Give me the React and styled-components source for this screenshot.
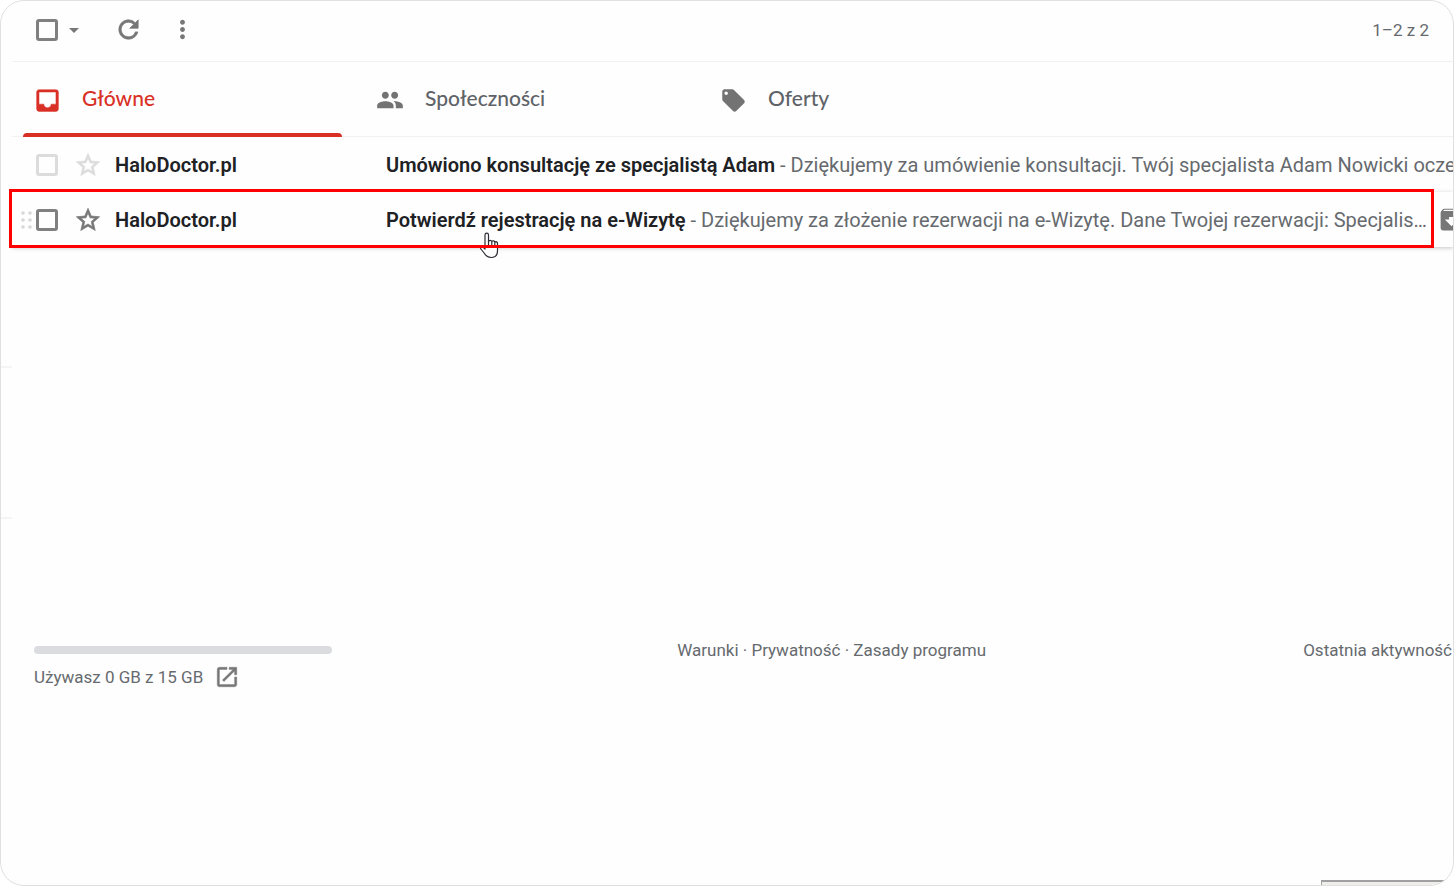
import React, { useState } from 'react';
import styled, { createGlobalStyle } from 'styled-components';
import {
  MdArchive,
  MdArrowDropDown,
  MdInbox,
  MdLocalOffer,
  MdMoreVert,
  MdOpenInNew,
  MdPeople,
  MdRefresh,
  MdStarBorder
} from 'react-icons/md';

const GlobalStyle = createGlobalStyle`
  *, *::before, *::after {
    box-sizing: border-box;
  }

  body {
    margin: 0;
    background: #ffffff;
    color: #666a6e;
    font-family: Roboto, 'Liberation Sans', sans-serif;
    font-size: 17px;
  }

  svg path[fill='none'] {
    stroke-width: 0;
  }
`;

const Frame = styled.div`
  position: relative;
  display: flex;
  min-height: 100vh;
  border: 1px solid #e0e0e0;
  border-radius: 24px;
  background: #fefefe;
  overflow: hidden;
`;

const Rail = styled.aside`
  flex: 0 0 11px;
  display: flex;
  flex-direction: column;
  padding-top: 365px;
  gap: 149px;
`;

const RailLine = styled.div`
  height: 2px;
  background: #f5f5f5;
`;

const Main = styled.main`
  flex: 1;
  min-width: 0;
`;

const Toolbar = styled.header`
  display: flex;
  align-items: center;
  height: 61px;
  padding: 0 24px;
  padding-bottom: 3px;
  border-bottom: 1px solid #f1f1f1;
`;

const Checkbox = styled.input`
  appearance: none;
  flex: none;
  width: 22px;
  height: 22px;
  margin: 0;
  border: 3px solid ${props => (props.$faint ? '#dcdcdc' : '#808080')};
  border-radius: 3px;

  &:checked {
    background: #808080;
  }
`;

const IconButton = styled.button`
  display: flex;
  align-items: center;
  justify-content: center;
  flex: none;
  width: ${props => props.$width || 30}px;
  height: 30px;
  padding: 0;
  border: 0;
  background: none;
  color: ${props => props.$color || '#777777'};
  cursor: pointer;

  svg {
    flex: none;
    stroke-width: ${props => (props.$bold ? 0.6 : 0)};
  }
`;

const ToolGroup = styled.div`
  display: flex;
  align-items: center;
  gap: 24px;
  margin-left: 23px;
`;

const Count = styled.span`
  margin-left: auto;
`;

const Tabs = styled.nav`
  display: flex;
  height: 75px;
  border-bottom: 1px solid #f1f1f1;
`;

const Tab = styled.button`
  position: relative;
  display: flex;
  align-items: center;
  gap: 20px;
  width: 343px;
  padding: 0 20px;
  border: 0;
  background: none;
  color: ${props => (props.$active ? '#d93025' : '#5f6368')};
  font-family: Lato, 'Liberation Sans', sans-serif;
  font-size: 21px;
  font-weight: 500;
  text-align: left;
  cursor: pointer;

  &::after {
    content: '';
    position: absolute;
    right: 13px;
    bottom: -1px;
    left: 11px;
    height: 4px;
    border-radius: 4px 4px 0 0;
    background: ${props => (props.$active ? '#d93025' : 'transparent')};
  }
`;

const TabIcon = styled.span`
  display: flex;
  justify-content: center;
  width: 30px;
  padding-top: 2px;
  color: ${props => (props.$active ? '#d93025' : '#737373')};

  svg {
    stroke-width: ${props => (props.$active ? 0.4 : 0)};
  }
`;

const TabLabel = styled.span`
  padding-bottom: 4px;
`;

const MailList = styled.ul`
  margin: 0;
  padding: 0;
  list-style: none;
`;

const MailRow = styled.li`
  position: relative;
  display: flex;
  align-items: center;
  height: 55px;
  box-shadow: ${props => (props.$hovered ? '0 1px 4px rgba(60, 64, 67, 0.3)' : 'none')};
  font-size: 20px;
  white-space: nowrap;
`;

const Grip = styled.span`
  display: flex;
  flex: 0 0 24px;
  padding-left: 9px;
`;

const StarSlot = styled.span`
  flex: 0 0 57px;
  padding-left: 15px;
`;

const Sender = styled.span`
  flex: 0 0 271px;
  color: #202124;
  font-weight: 600;
`;

const Message = styled.a`
  flex: 1;
  min-width: 0;
  color: #666a6e;
  text-decoration: none;
`;

const Subject = styled.strong`
  color: #202124;
  font-weight: 600;
`;

const RowActions = styled.span`
  display: flex;
  flex: 0 0 17px;
  min-width: 0;
`;

const Highlight = styled.div`
  position: absolute;
  inset: -3px 19px -1px -3px;
  border: 3px solid #ff0000;
  pointer-events: none;
`;

const Pointer = styled.svg`
  position: absolute;
  top: 40px;
  left: 467px;
`;

const Footer = styled.footer`
  display: grid;
  grid-template-columns: 3fr 3fr 2fr;
  padding: 391px 1px 0 22px;
  line-height: 24px;
  white-space: nowrap;
`;

const Storage = styled.div`
  padding-top: 8px;
`;

const StorageBar = styled.div`
  width: 298px;
  height: 8px;
  border-radius: 4px;
  background: #dadce0;
`;

const StorageText = styled.div`
  display: flex;
  align-items: center;
  gap: 11px;
  padding-top: 10px;
`;

const ManageLink = styled.a`
  display: flex;
  color: #777777;

  svg {
    stroke-width: 0.4;
  }
`;

const Terms = styled.div`
  text-align: center;
`;

const TermsLink = styled.a`
  color: inherit;
  text-decoration: none;
`;

const Activity = styled.div`
  text-align: right;
`;

const StatusCorner = styled.div`
  position: absolute;
  right: 0;
  bottom: 0;
  width: 132px;
  height: 5px;
  border-top: 2px solid #a0a0a0;
  border-left: 1px solid #a0a0a0;
  background: #f0eeeb;
`;

const tabs = [
  { id: 'primary', label: 'Główne', icon: MdInbox, size: 29 },
  { id: 'social', label: 'Społeczności', icon: MdPeople, size: 28 },
  { id: 'offers', label: 'Oferty', icon: MdLocalOffer, size: 27 }
];

const mails = [
  {
    id: 1,
    sender: 'HaloDoctor.pl',
    subject: 'Umówiono konsultację ze specjalistą Adam',
    snippet: 'Dziękujemy za umówienie konsultacji. Twój specjalista Adam Nowicki oczeku'
  },
  {
    id: 2,
    sender: 'HaloDoctor.pl',
    subject: 'Potwierdź rejestrację na e-Wizytę',
    snippet: 'Dziękujemy za złożenie rezerwacji na e-Wizytę. Dane Twojej rezerwacji: Specjalis…',
    hovered: true
  }
];

const GripDots = () => (
  <svg width="12" height="20" viewBox="0 0 12 20" fill="#d8d8d8" aria-hidden="true">
    {[3, 10, 17].map(y => (
      <React.Fragment key={y}>
        <circle cx="2" cy={y} r="1.8" />
        <circle cx="9" cy={y} r="1.8" />
      </React.Fragment>
    ))}
  </svg>
);

const HandPointer = () => (
  <Pointer width="20" height="27" viewBox="0 0 20 27" aria-hidden="true">
    <g stroke="#2b2b33" strokeWidth="1.2" strokeLinejoin="round">
      <path
        d="M6 17V3C6 .6 9.5 .6 9.5 3V9.5C10 8 12.500 8 12.8 9.5C13.5 8.5 15.5 8.5 15.8 10.2C17 9.2 18.5 9.8 18.5 11.5V19C18.5 23 16 25.5 12 25.5C8.5 25.5 7 24 5.5 21.5L1.5 16.5C1.5 14.5 3.5 14 6 17Z"
        fill="#ffffff"
      />
      <path d="M9.5 9V14M12.8 9.5V14M15.8 10.2V14" />
    </g>
  </Pointer>
);

const Mail = ({ mail }) => (
  <MailRow $hovered={mail.hovered}>
    <Grip>{mail.hovered && <GripDots />}</Grip>
    <Checkbox type="checkbox" $faint={!mail.hovered} aria-label={mail.subject} />
    <StarSlot>
      <IconButton type="button" aria-label="Gwiazdka" $bold $color={mail.hovered ? '#777777' : '#dcdcdc'}>
        <MdStarBorder size={28} />
      </IconButton>
    </StarSlot>
    <Sender>{mail.sender}</Sender>
    <Message href="#">
      <Subject>{mail.subject}</Subject> - {mail.snippet}
    </Message>
    {mail.hovered && (
      <>
        <RowActions>
          <IconButton type="button" aria-label="Archiwizuj">
            <MdArchive size={29} />
          </IconButton>
        </RowActions>
        <HandPointer />
        <Highlight />
      </>
    )}
  </MailRow>
);

const App = () => {
  const [activeTab, setActiveTab] = useState('primary');

  return (
    <>
      <GlobalStyle />
      <Frame>
        <Rail>
          <RailLine />
          <RailLine />
        </Rail>
        <Main>
          <Toolbar>
            <Checkbox type="checkbox" aria-label="Wybierz" />
            <IconButton type="button" $width={32} aria-label="Opcje wyboru">
              <MdArrowDropDown size={24} />
            </IconButton>
            <ToolGroup>
              <IconButton type="button" $bold aria-label="Odśwież">
                <MdRefresh size={29} />
              </IconButton>
              <IconButton type="button" aria-label="Więcej">
                <MdMoreVert size={29} />
              </IconButton>
            </ToolGroup>
            <Count>1–2 z 2</Count>
          </Toolbar>

          <Tabs>
            {tabs.map(({ id, label, icon: Icon, size }) => (
              <Tab key={id} type="button" $active={id === activeTab} onClick={() => setActiveTab(id)}>
                <TabIcon $active={id === activeTab}>
                  <Icon size={size} />
                </TabIcon>
                <TabLabel>{label}</TabLabel>
              </Tab>
            ))}
          </Tabs>

          <MailList>
            {mails.map(mail => (
              <Mail key={mail.id} mail={mail} />
            ))}
          </MailList>

          <Footer>
            <Storage>
              <StorageBar />
              <StorageText>
                Używasz 0 GB z 15 GB
                <ManageLink href="#" aria-label="Zarządzaj">
                  <MdOpenInNew size={26} />
                </ManageLink>
              </StorageText>
            </Storage>
            <Terms>
              <TermsLink href="#">Warunki</TermsLink> · <TermsLink href="#">Prywatność</TermsLink> ·{' '}
              <TermsLink href="#">Zasady programu</TermsLink>
            </Terms>
            <Activity>Ostatnia aktywność</Activity>
          </Footer>
        </Main>
        <StatusCorner />
      </Frame>
    </>
  );
};

export default App;
